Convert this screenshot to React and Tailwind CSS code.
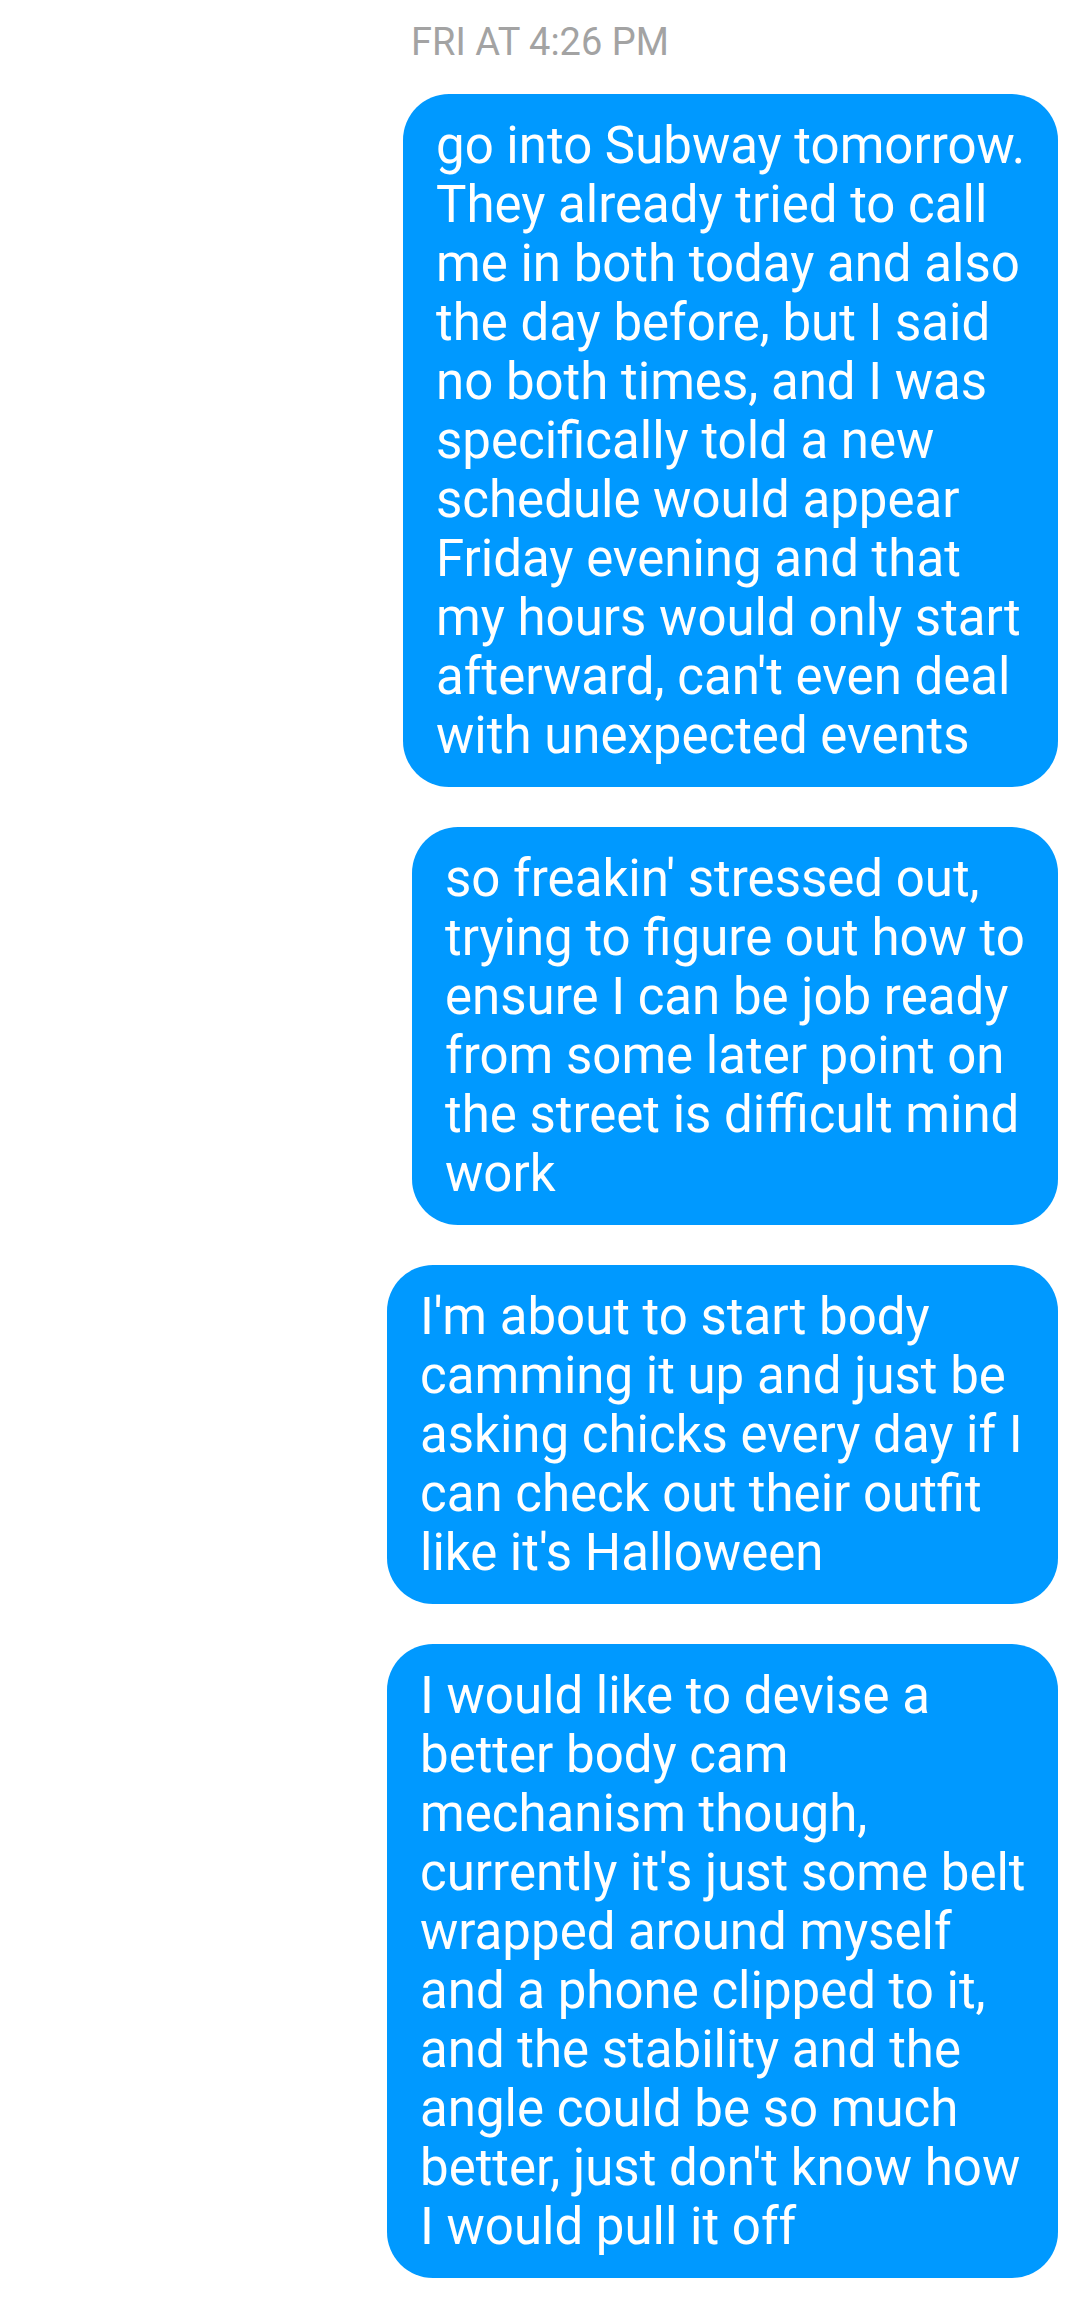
const messages = [
  {
    width: "w-[655px]",
    lines: [
      "go into Subway tomorrow.",
      "They already tried to call",
      "me in both today and also",
      "the day before, but I said",
      "no both times, and I was",
      "specifically told a new",
      "schedule would appear",
      "Friday evening and that",
      "my hours would only start",
      "afterward, can't even deal",
      "with unexpected events",
    ],
  },
  {
    width: "w-[646px]",
    lines: [
      "so freakin' stressed out,",
      "trying to figure out how to",
      "ensure I can be job ready",
      "from some later point on",
      "the street is difficult mind",
      "work",
    ],
  },
  {
    width: "w-[671px]",
    lines: [
      "I'm about to start body",
      "camming it up and just be",
      "asking chicks every day if I",
      "can check out their outfit",
      "like it's Halloween",
    ],
  },
  {
    width: "w-[671px]",
    lines: [
      "I would like to devise a",
      "better body cam",
      "mechanism though,",
      "currently it's just some belt",
      "wrapped around myself",
      "and a phone clipped to it,",
      "and the stability and the",
      "angle could be so much",
      "better, just don't know how",
      "I would pull it off",
    ],
  },
];

function Bubble({ width, lines }) {
  return (
    <div className={`${width} bg-[#0099ff] rounded-[46px] px-[33px] py-[22px] text-white text-[51px] leading-[59px]`}>
      {lines.map((line, i) => (
        <div key={i} className="whitespace-nowrap">
          {line}
        </div>
      ))}
    </div>
  );
}

export default function App() {
  return (
    <div className="min-h-[2308px] w-[1080px] bg-white font-['Roboto',sans-serif]">
      {/* Timestamp */}
      <div className="pt-[20px] text-center text-[38px] leading-[45px] text-[#a3a3a3]">
        FRI AT 4:26 PM
      </div>

      {/* Outgoing messages */}
      <div className="mt-[29px] flex flex-col items-end gap-[40px] pr-[22px]">
        {messages.map((m, i) => (
          <Bubble key={i} width={m.width} lines={m.lines} />
        ))}
      </div>
    </div>
  );
}
